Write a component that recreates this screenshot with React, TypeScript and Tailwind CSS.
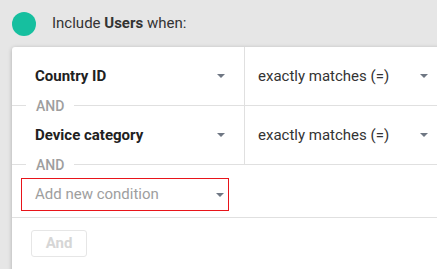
import React from 'react';

const Caret = () => (
  <svg width="8" height="4" viewBox="0 0 8 4" className="shrink-0">
    <path d="M0 0h8L4 4z" fill="#6f7783" />
  </svg>
);

const AndDivider = () => (
  <div className="flex items-center h-px">
    <div className="w-[14px] h-px bg-[#e0e0e0]" />
    <span className="px-[10px] text-[14px] font-medium leading-none text-[#9e9e9e]">AND</span>
    <div className="flex-1 h-px bg-[#e0e0e0]" />
  </div>
);

const ConditionRow = ({ dimension, match }: { dimension: string; match: string }) => (
  <div className="flex h-[58px]">
    <div className="w-[233px] flex items-center justify-between pl-[23px] pr-[19px] border-r border-[#e0e0e0]">
      <span className="text-[15px] font-bold text-[#212121]">{dimension}</span>
      <Caret />
    </div>
    <div className="w-[195px] flex items-center justify-between pl-[13px] pr-[12px]">
      <span className="text-[15px] text-[#333]">{match}</span>
      <Caret />
    </div>
  </div>
);

export default function App() {
  return (
    <div className="w-[437px] h-[269px] bg-[#e6e6e6] overflow-hidden font-['Roboto',sans-serif]">
      <div className="flex items-center h-[47px] pl-3 gap-[16px]">
        <div className="w-6 h-6 rounded-full bg-[#16bf9f]" />
        <span className="text-[15px] text-[#333]">
          Include <span className="font-bold">Users</span> when:
        </span>
      </div>
      <div className="ml-3 w-[440px] h-[240px] bg-white rounded-tl-[3px] shadow-[0_1px_4px_rgba(0,0,0,0.25)]">
        <ConditionRow dimension="Country ID" match="exactly matches (=)" />
        <AndDivider />
        <ConditionRow dimension="Device category" match="exactly matches (=)" />
        <AndDivider />
        <div className="pt-[13px] pb-[6px] pl-[9px]">
          <div className="w-[208px] h-[33px] border border-[#e8141a] flex items-center justify-between pl-[13px] pr-[4px]">
            <span className="text-[15px] text-[#9e9e9e]">Add new condition</span>
            <Caret />
          </div>
        </div>
        <div className="h-px bg-[#e0e0e0]" />
        <div className="pt-3 pl-[19px]">
          <button
            disabled
            className="w-[56px] h-[27px] border border-[#e6e6e6] rounded-[3px] text-[15px] font-bold text-[#d6d6d6]"
          >
            And
          </button>
        </div>
      </div>
    </div>
  );
}
